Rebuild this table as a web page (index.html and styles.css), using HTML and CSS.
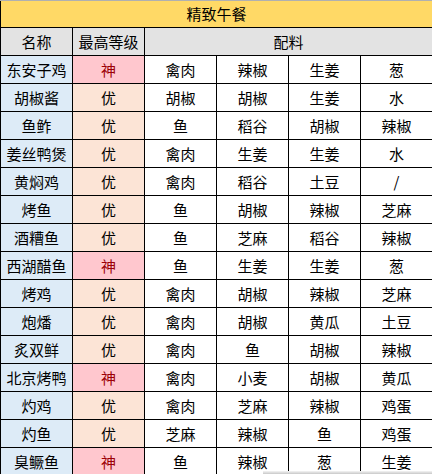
FILE: index.html
```html
<!DOCTYPE html>
<html lang="zh">
<head>
<meta charset="utf-8">
<link rel="stylesheet" href="styles.css">
</head>
<body>
<table class="sheet">
  <colgroup>
    <col class="c"><col class="c"><col class="c"><col class="c"><col class="c"><col class="c">
  </colgroup>
  <tr class="title"><td colspan="6">精致午餐</td></tr>
  <tr class="head"><td>名称</td><td>最高等级</td><td colspan="4">配料</td></tr>
  <tr><td class="name">东安子鸡</td><td class="god">神</td><td>禽肉</td><td>辣椒</td><td>生姜</td><td>葱</td></tr>
  <tr><td class="name">胡椒酱</td><td class="good">优</td><td>胡椒</td><td>胡椒</td><td>生姜</td><td>水</td></tr>
  <tr><td class="name">鱼鲊</td><td class="good">优</td><td>鱼</td><td>稻谷</td><td>胡椒</td><td>辣椒</td></tr>
  <tr><td class="name">姜丝鸭煲</td><td class="good">优</td><td>禽肉</td><td>生姜</td><td>生姜</td><td>水</td></tr>
  <tr><td class="name">黄焖鸡</td><td class="good">优</td><td>禽肉</td><td>稻谷</td><td>土豆</td><td>/</td></tr>
  <tr><td class="name">烤鱼</td><td class="good">优</td><td>鱼</td><td>胡椒</td><td>辣椒</td><td>芝麻</td></tr>
  <tr><td class="name">酒糟鱼</td><td class="good">优</td><td>鱼</td><td>芝麻</td><td>稻谷</td><td>辣椒</td></tr>
  <tr><td class="name">西湖醋鱼</td><td class="god">神</td><td>鱼</td><td>生姜</td><td>生姜</td><td>葱</td></tr>
  <tr><td class="name">烤鸡</td><td class="good">优</td><td>禽肉</td><td>胡椒</td><td>辣椒</td><td>芝麻</td></tr>
  <tr><td class="name">炮燔</td><td class="good">优</td><td>禽肉</td><td>胡椒</td><td>黄瓜</td><td>土豆</td></tr>
  <tr><td class="name">炙双鲜</td><td class="good">优</td><td>禽肉</td><td>鱼</td><td>胡椒</td><td>辣椒</td></tr>
  <tr><td class="name">北京烤鸭</td><td class="god">神</td><td>禽肉</td><td>小麦</td><td>胡椒</td><td>黄瓜</td></tr>
  <tr><td class="name">灼鸡</td><td class="good">优</td><td>禽肉</td><td>芝麻</td><td>辣椒</td><td>鸡蛋</td></tr>
  <tr><td class="name">灼鱼</td><td class="good">优</td><td>芝麻</td><td>辣椒</td><td>鱼</td><td>鸡蛋</td></tr>
  <tr><td class="name">臭鳜鱼</td><td class="god">神</td><td>鱼</td><td>辣椒</td><td>葱</td><td>生姜</td></tr>
</table>
<div class="hscroll"></div>
</body>
</html>
```
FILE: styles.css
```css
html, body {
  margin: 0;
  padding: 0;
  background: #ffffff;
  overflow: hidden;
}
body {
  font-family: "Noto Sans CJK SC", "Noto Sans", sans-serif;
  font-size: 15px;
  color: #000;
  width: 432px;
  height: 474px;
  position: relative;
}
.sheet {
  border-collapse: collapse;
  table-layout: fixed;
  width: 433px;
}
.sheet .c { width: 72px; }
.sheet td {
  border: 1px solid #000;
  text-align: center;
  vertical-align: middle;
  padding: 0;
  height: 27px;
  line-height: 20px;
  white-space: nowrap;
  overflow: hidden;
  background: #fff;
}
.sheet .title td {
  background: #ffd966;
  height: 26px;
  border-top-color: #b0b0b0;
}
.sheet .head td {
  background: #e3e3e3;
  height: 27px;
}
.sheet td.name { background: #ddebf7; }
.sheet td.good { background: #fce4d6; }
.sheet td.god { background: #ffc7ce; color: #9c0006; }
.hscroll {
  position: absolute;
  left: 263px;
  right: 0;
  bottom: 0;
  height: 3px;
  background: linear-gradient(#f4f4f4, #c8c8c8);
}
```
